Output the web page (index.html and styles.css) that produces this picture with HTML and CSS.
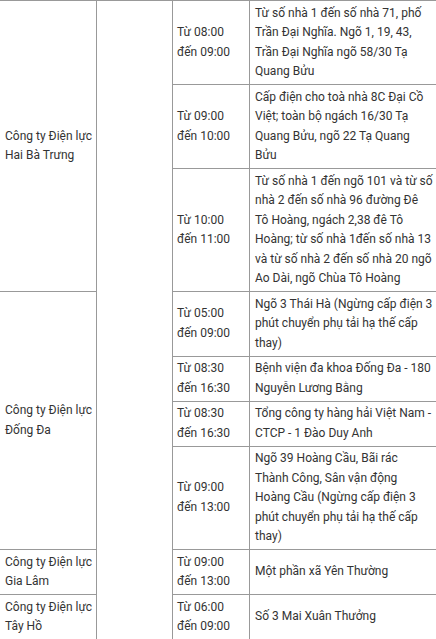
FILE: index.html
```html
<!DOCTYPE html>
<html lang="vi">
<head>
<meta charset="utf-8">
<title>Lịch cắt điện</title>
<link rel="stylesheet" href="styles.css">
</head>
<body>
<table class="schedule">
  <colgroup>
    <col class="c-company">
    <col class="c-blank">
    <col class="c-time">
    <col class="c-desc">
  </colgroup>
  <tbody>
    <tr>
      <td class="company" rowspan="3">Công ty Điện lực Hai Bà Trưng</td>
      <td class="blank" rowspan="9"></td>
      <td class="time">Từ 08:00 đến 09:00</td>
      <td class="desc">Từ số nhà 1 đến số nhà 71, phố Trần Đại Nghĩa. Ngõ 1, 19, 43, Trần Đại Nghĩa ngõ 58/30 Tạ Quang Bửu</td>
    </tr>
    <tr>
      <td class="time">Từ 09:00 đến 10:00</td>
      <td class="desc">Cấp điện cho toà nhà 8C Đại Cồ Việt; toàn bộ ngách 16/30 Tạ Quang Bửu, ngõ 22 Tạ Quang Bửu</td>
    </tr>
    <tr>
      <td class="time">Từ 10:00 đến 11:00</td>
      <td class="desc">Từ số nhà 1 đến ngõ 101 và từ số nhà 2 đến số nhà 96 đường Đê Tô Hoàng, ngách 2,38 đê Tô Hoàng; từ số nhà 1đến số nhà 13 và từ số nhà 2 đến số nhà 20 ngõ Ao Dài, ngõ Chùa Tô Hoàng</td>
    </tr>
    <tr>
      <td class="company" rowspan="4">Công ty Điện lực Đống Đa</td>
      <td class="time">Từ 05:00 đến 09:00</td>
      <td class="desc">Ngõ 3 Thái Hà (Ngừng cấp điện 3 phút chuyển phụ tải hạ thế cấp thay)</td>
    </tr>
    <tr>
      <td class="time">Từ 08:30 đến 16:30</td>
      <td class="desc">Bệnh viện đa khoa Đống Đa - 180 Nguyễn Lương Bằng</td>
    </tr>
    <tr>
      <td class="time">Từ 08:30 đến 16:30</td>
      <td class="desc">Tổng công ty hàng hải Việt Nam - CTCP - 1 Đào Duy Anh</td>
    </tr>
    <tr>
      <td class="time">Từ 09:00 đến 13:00</td>
      <td class="desc">Ngõ 39 Hoàng Cầu, Bãi rác Thành Công, Sân vận động Hoàng Cầu (Ngừng cấp điện 3 phút chuyển phụ tải hạ thế cấp thay)</td>
    </tr>
    <tr>
      <td class="company">Công ty Điện lực Gia Lâm</td>
      <td class="time">Từ 09:00 đến 13:00</td>
      <td class="desc">Một phần xã Yên Thường</td>
    </tr>
    <tr>
      <td class="company">Công ty Điện lực Tây Hồ</td>
      <td class="time">Từ 06:00 đến 09:00</td>
      <td class="desc">Số 3 Mai Xuân Thưởng</td>
    </tr>
  </tbody>
</table>
</body>
</html>
```
FILE: styles.css
```css
html, body {
  margin: 0;
  padding: 0;
  background: #ffffff;
  overflow: hidden;
}

body {
  font-family: Roboto, "Liberation Sans", Arial, sans-serif;
  font-size: 12px;
  line-height: 19.5px;
  color: #333333;
}

.schedule {
  border-collapse: separate;
  border-spacing: 0;
  table-layout: fixed;
  width: 439px;
  border-top: 1px solid #999999;
}

.c-company { width: 97px; }
.c-blank { width: 76px; }
.c-time { width: 77px; }
.c-desc { width: 189px; }

.schedule td {
  box-sizing: border-box;
  border-right: 1px solid #999999;
  border-bottom: 1px solid #999999;
  padding: 2.5px 5px;
  vertical-align: middle;
  text-align: left;
}

.schedule td.company {
  padding-left: 5px;
  padding-right: 2px;
}

.schedule td.time {
  padding-left: 4px;
  padding-right: 4px;
}
```
